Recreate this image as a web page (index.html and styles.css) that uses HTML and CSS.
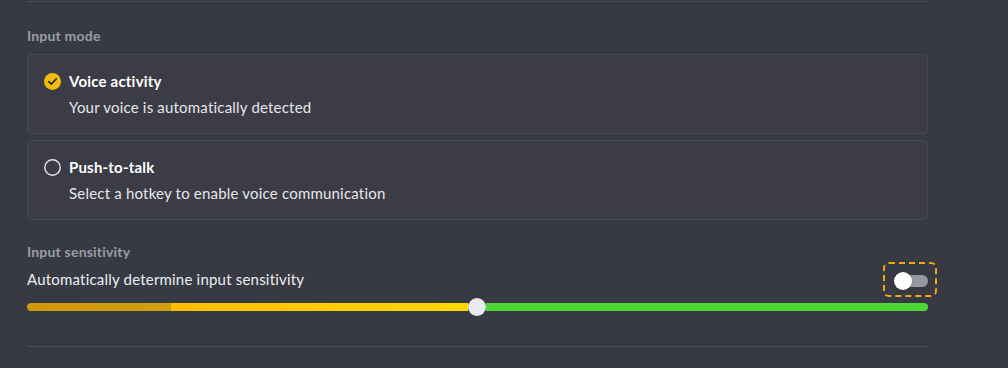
FILE: index.html
```html
<!DOCTYPE html>
<html lang="en">
<head>
<meta charset="utf-8">
<title>Voice settings</title>
<link rel="stylesheet" href="styles.css">
</head>
<body>
<div class="panel">
  <div class="divider top"></div>
  <div class="section-label first">Input mode</div>
  <div class="option selected">
    <div class="option-head">
      <svg class="icon" width="17" height="17" viewBox="0 0 17 17">
        <circle cx="8.5" cy="8.5" r="8.5" fill="#f2bc0c"/>
        <path d="M4.8 8.7 L7.3 11.1 L12.2 6" fill="none" stroke="#2c2c35" stroke-width="1.8" stroke-linecap="round" stroke-linejoin="round"/>
      </svg>
      <span class="option-title">Voice activity</span>
    </div>
    <div class="option-desc">Your voice is automatically detected</div>
  </div>
  <div class="option">
    <div class="option-head">
      <svg class="icon" width="17" height="17" viewBox="0 0 17 17">
        <circle cx="8.5" cy="8.5" r="7.7" fill="none" stroke="#e4e4ea" stroke-width="1.4"/>
      </svg>
      <span class="option-title">Push-to-talk</span>
    </div>
    <div class="option-desc">Select a hotkey to enable voice communication</div>
  </div>
  <div class="section-label second">Input sensitivity</div>
  <div class="toggle-row">
    <span class="toggle-text">Automatically determine input sensitivity</span>
    <span class="toggle" role="switch" aria-checked="false"><span class="knob"></span></span>
  </div>
  <div class="slider">
    <div class="seg gold"></div>
    <div class="seg yellow"></div>
    <div class="thumb"></div>
    <div class="seg green"></div>
  </div>
  <div class="divider bottom"></div>
</div>
</body>
</html>
```
FILE: styles.css
```css
html, body {
  margin: 0;
  padding: 0;
  background: #373943;
  height: 100%;
  overflow: hidden;
}
body {
  font-family: Lato, "Noto Sans", sans-serif;
  letter-spacing: 0.2px;
  color: #ffffff;
}
.panel {
  margin-left: 27px;
  width: 901px;
  display: flex;
  flex-direction: column;
}
.divider {
  height: 1px;
  background: #4b4c56;
}
.divider.top {
  margin-top: 1px;
}
.section-label {
  font-size: 14px;
  font-weight: 700;
  line-height: 16px;
  color: #9c9ca6;
}
.section-label.first {
  margin-top: 26px;
  margin-bottom: 10px;
}
.section-label.second {
  margin-top: 24px;
}
.option {
  box-sizing: border-box;
  height: 80px;
  background: #3c3c46;
  border: 1px solid #484852;
  border-radius: 4px;
  padding: 16px;
}
.option + .option {
  margin-top: 6px;
}
.option-head {
  display: flex;
  align-items: center;
  height: 20px;
  gap: 8px;
}
.icon {
  flex: none;
  display: block;
}
.option-title {
  font-size: 15px;
  font-weight: 700;
  line-height: 20px;
  color: #ffffff;
}
.option-desc {
  margin-top: 6px;
  margin-left: 25px;
  font-size: 15px;
  line-height: 20px;
  color: #e6e6ec;
}
.toggle-row {
  margin-top: 7px;
  height: 24px;
  display: flex;
  align-items: center;
  justify-content: space-between;
}
.toggle-text {
  font-size: 15px;
  line-height: 24px;
  color: #eeeef2;
}
.toggle {
  position: relative;
  width: 34px;
  height: 18px;
  margin-top: 3px;
  display: flex;
  align-items: center;
}
.toggle::before {
  content: "";
  flex: 1;
  height: 12px;
  border-radius: 6px;
  background: #9797a2;
  margin-left: 6px;
}
.toggle::after {
  content: "";
  position: absolute;
  left: -11px;
  right: -9px;
  top: -10px;
  bottom: -7px;
  border: 2.5px dashed #f3a80c;
  border-radius: 6px;
}
.knob {
  position: absolute;
  left: 0;
  top: 0;
  width: 18px;
  height: 18px;
  border-radius: 50%;
  background: #ffffff;
  box-shadow: 0 0 2px rgba(0,0,0,0.3);
}
.slider {
  margin-top: 12px;
  height: 8px;
  display: flex;
  align-items: center;
}
.seg {
  height: 8px;
}
.gold {
  width: 144px;
  border-radius: 4px 0 0 4px;
  background: linear-gradient(90deg, #cf9806, #cf9f0e);
}
.yellow {
  width: 297px;
  background: linear-gradient(90deg, #ffbd00, #ffd800);
}
.thumb {
  flex: none;
  width: 18px;
  height: 18px;
  border-radius: 50%;
  background: #e9eaed;
}
.green {
  flex: 1;
  border-radius: 0 4px 4px 0;
  background: #4cd736;
}
.divider.bottom {
  margin-top: 35px;
}
```
